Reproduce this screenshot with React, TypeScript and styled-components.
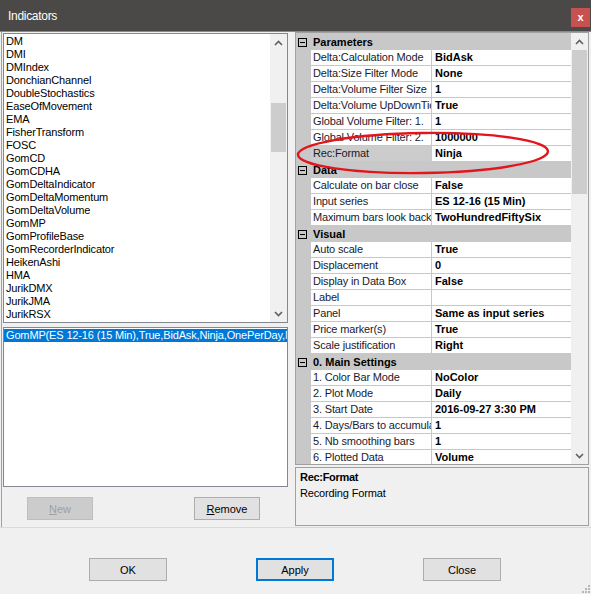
import React from "react";
import styled, { createGlobalStyle } from "styled-components";

const GlobalStyle = createGlobalStyle`
  html, body {
    margin: 0;
    padding: 0;
    background: #f0f0f0;
  }
  * {
    box-sizing: border-box;
  }
`;

const Window = styled.div`
  position: relative;
  width: 591px;
  height: 594px;
  overflow: hidden;
  display: flex;
  flex-direction: column;
  background: #f0f0f0;
  font-family: "Liberation Sans", Arial, sans-serif;
  font-size: 11px;
  letter-spacing: -0.15px;
  color: #000;
`;

const TitleBar = styled.div`
  height: 32px;
  flex-shrink: 0;
  display: flex;
  align-items: flex-start;
  justify-content: space-between;
  padding: 0 1px 0 8px;
  background: #4a4947;
  border-bottom: 1px solid #8a8a8a;
  color: #fff;
`;

const Title = styled.span`
  margin-top: 9px;
  font-size: 12px;
  letter-spacing: -0.3px;
`;

const CloseButton = styled.div`
  width: 19px;
  height: 19px;
  margin-top: 8px;
  display: flex;
  align-items: center;
  justify-content: center;
  background: #c75050;
  color: #fff;
  font-size: 11px;
  font-weight: bold;
  padding-bottom: 2px;
`;

const Split = styled.div`
  height: 496px;
  flex-shrink: 0;
  display: flex;
  border-bottom: 1px solid #dadada;
`;

const LeftPanel = styled.div`
  width: 287px;
  flex-shrink: 0;
  margin-left: 1px;
  padding: 1px 0 0 1px;
  border-left: 1px solid #a0a0a0;
  display: flex;
  flex-direction: column;
`;

const ListBox = styled.div<{ $height: number }>`
  height: ${(p) => p.$height}px;
  flex-shrink: 0;
  display: flex;
  background: #fff;
  border: 1px solid #828790;
  overflow: hidden;
`;

const ListItems = styled.div`
  flex: 1;
  min-width: 0;
  padding-top: 1px;
  display: flex;
  flex-direction: column;
`;

const ListItem = styled.div<{ $selected?: boolean }>`
  height: 13px;
  line-height: 13px;
  padding-left: 2px;
  white-space: nowrap;
  overflow: hidden;
  background: ${(p) => (p.$selected ? "#0078d7" : "transparent")};
  color: ${(p) => (p.$selected ? "#fff" : "#000")};
`;

const ScrollBar = styled.div`
  width: 17px;
  flex-shrink: 0;
  display: flex;
  flex-direction: column;
  background: #f0f0f0;
`;

const ScrollArrow = styled.div`
  height: 17px;
  flex-shrink: 0;
  display: flex;
  align-items: center;
  justify-content: center;
`;

const ScrollTrack = styled.div`
  flex: 1;
  padding: 0 1px;
`;

const ScrollThumb = styled.div<{ $top: number; $height: number }>`
  margin-top: ${(p) => p.$top}px;
  height: ${(p) => p.$height}px;
  background: #cdcdcd;
`;

const SecondList = styled(ListBox)`
  margin-top: 4px;
`;

const ButtonRow = styled.div`
  margin-top: 10px;
  display: flex;
  justify-content: space-between;
  padding: 0 28px 0 24px;
`;

const Button = styled.div<{ $disabled?: boolean; $default?: boolean; $width?: number }>`
  width: ${(p) => p.$width ?? 66}px;
  height: 23px;
  display: flex;
  align-items: center;
  justify-content: center;
  background: ${(p) => (p.$disabled ? "#cccccc" : "#e1e1e1")};
  border: ${(p) =>
    p.$default ? "2px solid #0078d7" : p.$disabled ? "1px solid #bfbfbf" : "1px solid #adadad"};
  color: ${(p) => (p.$disabled ? "#a0a0a0" : "#000")};
  letter-spacing: 0;
`;

const RightPanel = styled.div`
  flex: 1;
  padding: 0 2px 0 7px;
  display: flex;
  flex-direction: column;
`;

const Grid = styled.div`
  height: 433px;
  flex-shrink: 0;
  display: flex;
  border: 1px solid #a0a0a0;
  background: #fff;
  overflow: hidden;
`;

const GridRows = styled.div`
  flex: 1;
  min-width: 0;
  padding-top: 1px;
  display: flex;
  flex-direction: column;
  background: #c8c8c8;
`;

const PropRow = styled.div`
  height: 16px;
  flex-shrink: 0;
  display: grid;
  grid-template-columns: 15px 121px minmax(0, 1fr);
`;

const CategoryRow = styled.div`
  height: 16px;
  flex-shrink: 0;
  display: flex;
  align-items: center;
  background: #c8c8c8;
  font-weight: bold;
  letter-spacing: 0;
`;

const Toggle = styled.div`
  width: 9px;
  height: 9px;
  margin: 0 6px 0 2px;
  border: 1px solid #000;
  display: flex;
  align-items: center;
  justify-content: center;
  &::after {
    content: "";
    width: 5px;
    height: 1px;
    background: #000;
  }
`;

const NameCell = styled.div<{ $selected?: boolean }>`
  height: 16px;
  min-width: 0;
  line-height: 15px;
  padding-left: 2px;
  white-space: nowrap;
  overflow: hidden;
  border-right: 1px solid #c8c8c8;
  border-bottom: 1px solid #c8c8c8;
  background: ${(p) => (p.$selected ? "#cccccc" : "#fff")};
  color: #1a1a2e;
`;

const ValueCell = styled.div`
  height: 16px;
  min-width: 0;
  line-height: 15px;
  padding-left: 3px;
  white-space: nowrap;
  overflow: hidden;
  border-bottom: 1px solid #c8c8c8;
  background: #fff;
  font-weight: bold;
  letter-spacing: 0;
`;

const Description = styled.div`
  height: 59px;
  margin-top: 2px;
  padding: 1px 4px;
  border: 1px solid #a0a0a0;
  background: #f0f0f0;
  line-height: 16px;
`;

const DescTitle = styled.div`
  font-weight: bold;
  letter-spacing: -0.3px;
`;

const Footer = styled.div`
  flex: 1;
  display: flex;
  gap: 89px;
  padding: 30px 0 0 89px;
`;

const Overlay = styled.svg`
  position: absolute;
  left: 0;
  top: 0;
  pointer-events: none;
`;

const SizeGrip = styled.svg`
  position: absolute;
  right: 1px;
  bottom: 1px;
`;

const indicators = [
  "DM",
  "DMI",
  "DMIndex",
  "DonchianChannel",
  "DoubleStochastics",
  "EaseOfMovement",
  "EMA",
  "FisherTransform",
  "FOSC",
  "GomCD",
  "GomCDHA",
  "GomDeltaIndicator",
  "GomDeltaMomentum",
  "GomDeltaVolume",
  "GomMP",
  "GomProfileBase",
  "GomRecorderIndicator",
  "HeikenAshi",
  "HMA",
  "JurikDMX",
  "JurikJMA",
  "JurikRSX",
];

type Prop = { name: string; value: string; selected?: boolean };
type Category = { title: string; props: Prop[] };

const categories: Category[] = [
  {
    title: "Parameters",
    props: [
      { name: "Delta:Calculation Mode", value: "BidAsk" },
      { name: "Delta:Size Filter Mode", value: "None" },
      { name: "Delta:Volume Filter Size", value: "1" },
      { name: "Delta:Volume UpDownTick", value: "True" },
      { name: "Global Volume Filter: 1.", value: "1" },
      { name: "Global Volume Filter: 2.", value: "1000000" },
      { name: "Rec:Format", value: "Ninja", selected: true },
    ],
  },
  {
    title: "Data",
    props: [
      { name: "Calculate on bar close", value: "False" },
      { name: "Input series", value: "ES 12-16 (15 Min)" },
      { name: "Maximum bars look back", value: "TwoHundredFiftySix" },
    ],
  },
  {
    title: "Visual",
    props: [
      { name: "Auto scale", value: "True" },
      { name: "Displacement", value: "0" },
      { name: "Display in Data Box", value: "False" },
      { name: "Label", value: "" },
      { name: "Panel", value: "Same as input series" },
      { name: "Price marker(s)", value: "True" },
      { name: "Scale justification", value: "Right" },
    ],
  },
  {
    title: "0. Main Settings",
    props: [
      { name: "1. Color Bar Mode", value: "NoColor" },
      { name: "2. Plot Mode", value: "Daily" },
      { name: "3. Start Date", value: "2016-09-27 3:30 PM" },
      { name: "4. Days/Bars to accumulate", value: "1" },
      { name: "5. Nb smoothing bars", value: "1" },
      { name: "6. Plotted Data", value: "Volume" },
    ],
  },
];

const Chevron = ({ down }: { down?: boolean }) => (
  <svg width="9" height="6" viewBox="0 0 9 6">
    <polyline
      points={down ? "1,1 4.5,4.5 8,1" : "1,5 4.5,1.5 8,5"}
      fill="none"
      stroke="#606060"
      strokeWidth="1.6"
    />
  </svg>
);

const VScroll = ({ top, height }: { top: number; height: number }) => (
  <ScrollBar>
    <ScrollArrow>
      <Chevron />
    </ScrollArrow>
    <ScrollTrack>
      <ScrollThumb $top={top} $height={height} />
    </ScrollTrack>
    <ScrollArrow>
      <Chevron down />
    </ScrollArrow>
  </ScrollBar>
);

const App = () => {
  return (
    <>
      <GlobalStyle />
      <Window>
        <TitleBar>
          <Title>Indicators</Title>
          <CloseButton>x</CloseButton>
        </TitleBar>

        <Split>
          <LeftPanel>
            <ListBox $height={290}>
              <ListItems>
                {indicators.map((name) => (
                  <ListItem key={name}>{name}</ListItem>
                ))}
              </ListItems>
              <VScroll top={52} height={49} />
            </ListBox>

            <SecondList $height={160}>
              <ListItems>
                <ListItem $selected>
                  GomMP(ES 12-16 (15 Min),True,BidAsk,Ninja,OnePerDay,Ninja,1,1)
                </ListItem>
              </ListItems>
            </SecondList>

            <ButtonRow>
              <Button $disabled>
                <span>
                  <u>N</u>ew
                </span>
              </Button>
              <Button>
                <span>
                  <u>R</u>emove
                </span>
              </Button>
            </ButtonRow>
          </LeftPanel>

          <RightPanel>
            <Grid>
              <GridRows>
                {categories.map((cat) => (
                  <React.Fragment key={cat.title}>
                    <CategoryRow>
                      <Toggle />
                      {cat.title}
                    </CategoryRow>
                    {cat.props.map((p) => (
                      <PropRow key={p.name}>
                        <span />
                        <NameCell $selected={p.selected}>{p.name}</NameCell>
                        <ValueCell>{p.value}</ValueCell>
                      </PropRow>
                    ))}
                  </React.Fragment>
                ))}
              </GridRows>
              <VScroll top={0} height={144} />
            </Grid>
            <Description>
              <DescTitle>Rec:Format</DescTitle>
              <div>Recording Format</div>
            </Description>
          </RightPanel>
        </Split>

        <Footer>
          <Button $width={78}>OK</Button>
          <Button $width={78} $default>
            Apply
          </Button>
          <Button $width={78}>Close</Button>
        </Footer>

        <Overlay width="591" height="594" viewBox="0 0 591 594">
          <ellipse
            cx="423"
            cy="153"
            rx="125"
            ry="20"
            fill="none"
            stroke="#e3141c"
            strokeWidth="2.4"
            transform="rotate(-0.8 423 153)"
          />
        </Overlay>

        <SizeGrip width="8" height="8" viewBox="0 0 8 8">
          {[
            [6, 0],
            [6, 3],
            [3, 3],
            [6, 6],
            [3, 6],
            [0, 6],
          ].map(([x, y]) => (
            <rect key={`${x}-${y}`} x={x} y={y} width="2" height="2" fill="#b8b8b8" />
          ))}
        </SizeGrip>
      </Window>
    </>
  );
};

export default App;
